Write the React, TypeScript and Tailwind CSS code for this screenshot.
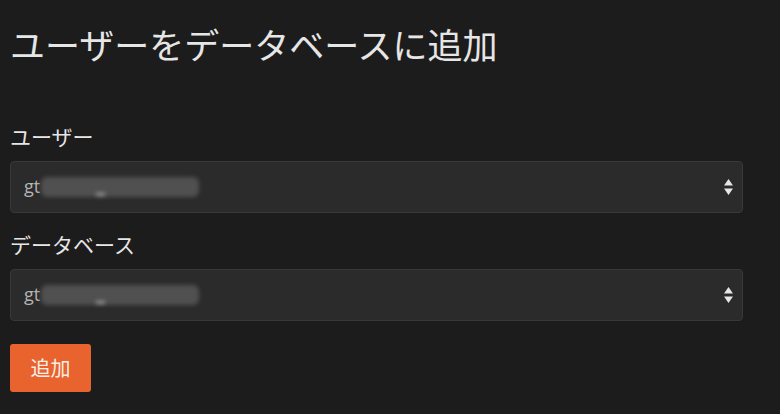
import React from "react";

function Arrows() {
  return (
    <svg width="11" height="18" viewBox="0 0 11 18" className="shrink-0">
      <path d="M5.5 1 L10 7.5 L1 7.5 Z" fill="#e6e6e6" />
      <path d="M5.5 17 L10 10.5 L1 10.5 Z" fill="#e6e6e6" />
    </svg>
  );
}

function Select({ blurWidth }: { blurWidth: number }) {
  return (
    <div className="h-[52px] w-[733px] rounded-[4px] border border-[#383838] bg-[#2b2b2b] flex items-center pl-[13px] pr-[8px]">
      <span className="text-[18px] text-[#b4b4b4] font-['Open_Sans',sans-serif] leading-none -mt-[2px]">gt</span>
      <span className="relative ml-[1px] h-[20px] rounded-[6px] bg-[#505050] blur-[2px]" style={{ width: blurWidth }}>
        <span className="absolute left-[55px] bottom-[1px] h-[3px] w-[9px] bg-[#a0a0a0]" />
      </span>
      <div className="flex-1" />
      <Arrows />
    </div>
  );
}

export default function App() {
  return (
    <div className="w-[780px] h-[414px] bg-[#1c1c1c] pl-[10px] pt-[20px] font-['Noto_Sans_CJK_JP',sans-serif] text-[#e6e6e6]">
      <h1 className="text-[35px] leading-[48px] font-normal">ユーザーをデータベースに追加</h1>
      <div className="mt-[54px] text-[21px] leading-[28px]">ユーザー</div>
      <div className="mt-[11px]">
        <Select blurWidth={158} />
      </div>
      <div className="mt-[17px] text-[21px] leading-[28px]">データベース</div>
      <div className="mt-[11px]">
        <Select blurWidth={158} />
      </div>
      <button className="mt-[23px] h-[48px] w-[81px] rounded-[3px] bg-[#e8632e] text-[20px] text-[#fbeee6] flex items-center justify-center">
        追加
      </button>
    </div>
  );
}
